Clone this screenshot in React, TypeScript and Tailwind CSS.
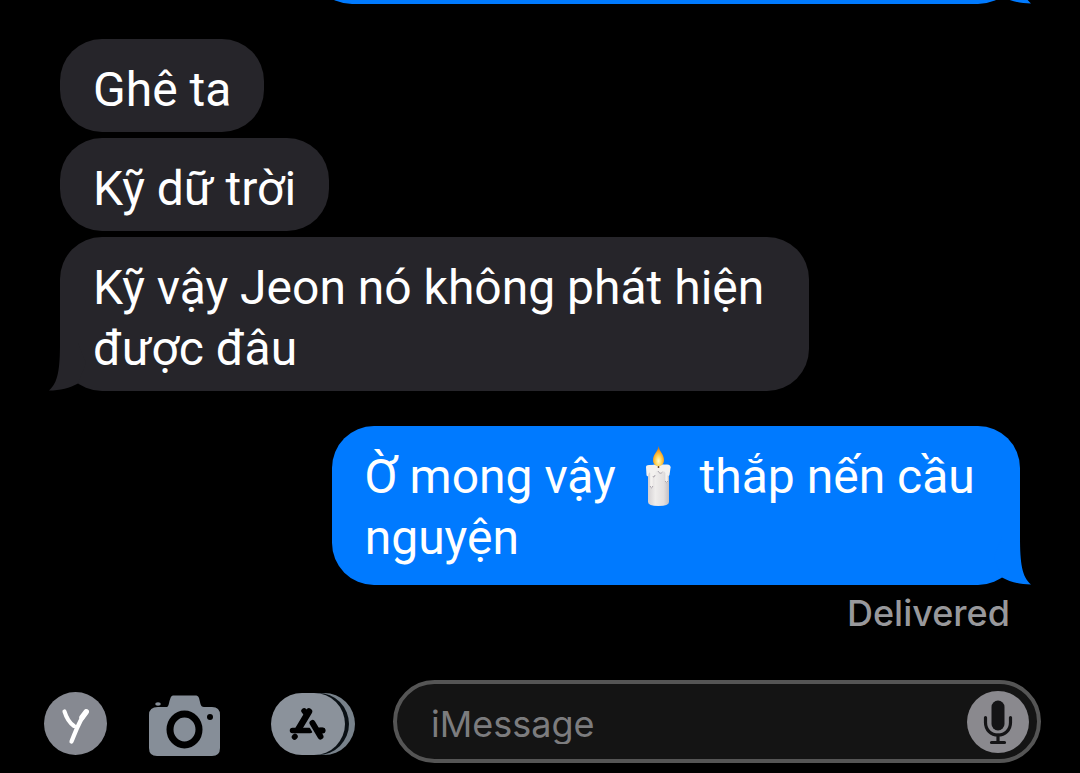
import type { ReactNode } from 'react';
import clsx from 'clsx';

type BubbleProps = {
  from: 'me' | 'them';
  tail?: boolean;
  className?: string;
  children?: ReactNode;
};

function Tail({ from }: { from: 'me' | 'them' }) {
  return (
    <svg
      viewBox="0 0 44 48"
      aria-hidden="true"
      className={clsx(
        'absolute bottom-0 h-12 w-11',
        from === 'me' ? '-right-3 text-[#007aff]' : '-left-3 -scale-x-100 text-[#26252a]'
      )}
    >
      <path fill="currentColor" d="M32 0C32 26 34 40 43 47.5C32 47.5 22 45 14 40.5L6 20L14 0Z" />
    </svg>
  );
}

function Bubble({ from, tail, className, children }: BubbleProps) {
  return (
    <div
      className={clsx(
        "relative shrink-0 rounded-[42px] px-[33px] pt-5 font-['Roboto','Liberation_Sans',sans-serif] text-5xl leading-[61px] text-white",
        from === 'me' ? 'self-end bg-[#007aff]' : 'self-start bg-[#26252a]',
        className
      )}
    >
      {tail && <Tail from={from} />}
      {children && <p className="relative">{children}</p>}
    </div>
  );
}

function Candle() {
  return (
    <svg viewBox="0 0 60 62" role="img" aria-label="candle" className="-mt-3 -mb-1 inline-block h-[62px] w-[60px] align-middle">
      <defs>
        <linearGradient id="wax" x1="0" x2="1" y1="0" y2="0">
          <stop offset="0" stopColor="#d3d0d2" />
          <stop offset="0.35" stopColor="#efedec" />
          <stop offset="0.75" stopColor="#e2dfdf" />
          <stop offset="1" stopColor="#c3bfc3" />
        </linearGradient>
        <radialGradient id="flame" cx="0.5" cy="0.75" r="0.65">
          <stop offset="0" stopColor="#fffbd0" />
          <stop offset="0.4" stopColor="#ffd75a" />
          <stop offset="0.8" stopColor="#f59a1c" />
          <stop offset="1" stopColor="#c9791f" />
        </radialGradient>
      </defs>
      <path d="M20 24V57Q20 61 30.500 61Q41 61 41 57V24Z" fill="url(#wax)" />
      <ellipse cx="30.500" cy="22.500" rx="12" ry="3" fill="#e9e6e4" />
      <path
        d="M18 22Q18 20 21 20L39 19.500Q43 19.500 42.500 23L41.500 30Q40.500 32 39.700 30V37Q38.500 39.500 37.300 37V28Q36 25 34.500 27Q32 30 30 26Q28 25 27 28V32Q26 34 24.800 32V42Q23.500 45 22.200 42V28Q20.800 26 20.300 31Q19 32 18.500 30Z"
        fill="#f3f1ef"
      />
      <path d="M22.200 41Q23.500 45 24.800 41M37.300 36Q38.500 39.500 39.700 36M25 31Q26 34 27 30M34.500 27Q32 30 30 26" fill="none" stroke="#aaa5ad" strokeWidth="1" />
      <path d="M30.500 16V23" stroke="#6b4d32" strokeWidth="1.500" />
      <path d="M30.500 1C31.500 7 36 9 36 15C36 19 33.500 21 30.500 21C27.500 21 25 19 25 15C25 9 30 7 30.500 1Z" fill="url(#flame)" />
    </svg>
  );
}

function PenIcon() {
  return (
    <svg viewBox="0 0 63 63" aria-hidden="true" className="size-[63px]">
      <circle cx="31.500" cy="31.500" r="31.500" fill="#868991" />
      <g fill="none" stroke="#fff" strokeLinecap="round" strokeLinejoin="round">
        <path d="M20.500 19.500C22.500 26 25.500 31 30 34" strokeWidth="4.200" />
        <path d="M42.500 19.500C36 27 33 36 27.500 49.500" strokeWidth="4.200" />
        <path d="M42.200 19.800L38 25.500" strokeWidth="5.500" />
      </g>
    </svg>
  );
}

function CameraIcon() {
  return (
    <svg viewBox="0 0 72 62" aria-hidden="true" className="h-[62px] w-[72px]">
      <path
        fill="#868e98"
        d="M9 12H17C19.500 12 19.500 10 20.500 6L21.500 3C22 1 23.500 0.500 25 0.500H46C48 0.500 49.300 1 50 3L51.500 9C52 11 53 12 55 12H63Q71 12 71 20V53Q71 61 63 61H8Q0 61 0 53V20Q0 12 9 12Z"
      />
      <ellipse cx="9" cy="9" rx="2.800" ry="1.800" fill="#868e98" />
      <ellipse cx="35.500" cy="34.500" rx="14.500" ry="15.500" fill="none" stroke="#000" strokeWidth="7" />
      <circle cx="61" cy="22" r="3" fill="#000" />
    </svg>
  );
}

function AppsIcon() {
  return (
    <svg viewBox="0 0 86 62" aria-hidden="true" className="h-[62px] w-[86px]">
      <rect x="8" width="76" height="62" rx="31" fill="#78828b" />
      <rect x="2" width="76" height="62" rx="31" fill="#0a1015" />
      <rect x="0" width="74" height="62" rx="31" fill="#8b929b" />
      <g fill="none" stroke="#000" strokeLinecap="round">
        <path d="M38 18.500L27.500 36" strokeWidth="6.500" />
        <path d="M33 17.800L35.500 21" strokeWidth="5.500" />
        <path d="M21.500 37.500H39M47 37.500H51.500" strokeWidth="5.500" />
        <path d="M24 43.500L23.500 44" strokeWidth="5.500" />
        <path d="M40.500 29L49.500 44" stroke="#8b929b" strokeLinecap="butt" strokeWidth="9" />
        <path d="M41.500 30L49.500 43.500M47 37.500H51.500" strokeWidth="6" />
      </g>
    </svg>
  );
}

function MicIcon() {
  return (
    <svg viewBox="0 0 62 62" aria-hidden="true" className="size-[62px]">
      <circle cx="31" cy="31" r="31" fill="#8a898e" />
      <rect x="24.500" y="9.500" width="13" height="30" rx="6.500" fill="#141416" />
      <g fill="none" stroke="#141416" strokeLinecap="round" strokeWidth="3.200">
        <path d="M18.500 26.500V31.500C18.500 39 24 44 31 44C38 44 43.500 39 43.500 31.500V26.500" />
        <path d="M31 44V51M24.500 51.500H37.500" />
      </g>
    </svg>
  );
}

export default function App() {
  return (
    <div className="flex h-screen flex-col overflow-hidden bg-black font-['Inter','Liberation_Sans',sans-serif]">
      <main className="flex min-h-0 flex-1 flex-col justify-end overflow-hidden px-[60px]">
        <Bubble from="me" tail className="mb-[35px] min-h-[93px] w-[74%]" />
        <Bubble from="them" className="mb-1.5 pb-3">Ghê ta</Bubble>
        <Bubble from="them" className="mb-1.5 pb-3">Kỹ dữ trời</Bubble>
        <Bubble from="them" tail className="mb-[35px] max-w-[78%] pb-3">
          Kỹ vậy Jeon nó không phát hiện được đâu
        </Bubble>
        <Bubble from="me" tail className="max-w-[71.7%] pb-[17px]">
          Ờ mong vậy <Candle /> thắp nến cầu nguyện
        </Bubble>
        <p className="mt-2 mr-2.5 mb-[47px] self-end text-4xl leading-10 font-medium text-[#98989b]">Delivered</p>
      </main>

      <form className="flex items-center gap-9 pr-[39px] pb-2.5 pl-11" onSubmit={(e) => e.preventDefault()}>
        <button type="button" aria-label="Profile" className="mt-1 shrink-0">
          <PenIcon />
        </button>
        <button type="button" aria-label="Camera" className="mt-2 ml-1.5 shrink-0">
          <CameraIcon />
        </button>
        <button type="button" aria-label="Apps" className="mt-1 ml-3.5 shrink-0">
          <AppsIcon />
        </button>
        <div className="flex h-[83px] min-w-0 flex-1 items-center rounded-full border-4 border-[#555555] bg-[#141414] pr-2 pl-[34px]">
          <input
            type="text"
            aria-label="Message"
            placeholder="iMessage"
            className="min-w-0 flex-1 bg-transparent pt-1 text-4xl text-white outline-none placeholder:text-[#7c7c7e]"
          />
          <button type="button" aria-label="Dictate" className="shrink-0">
            <MicIcon />
          </button>
        </div>
      </form>
    </div>
  );
}
